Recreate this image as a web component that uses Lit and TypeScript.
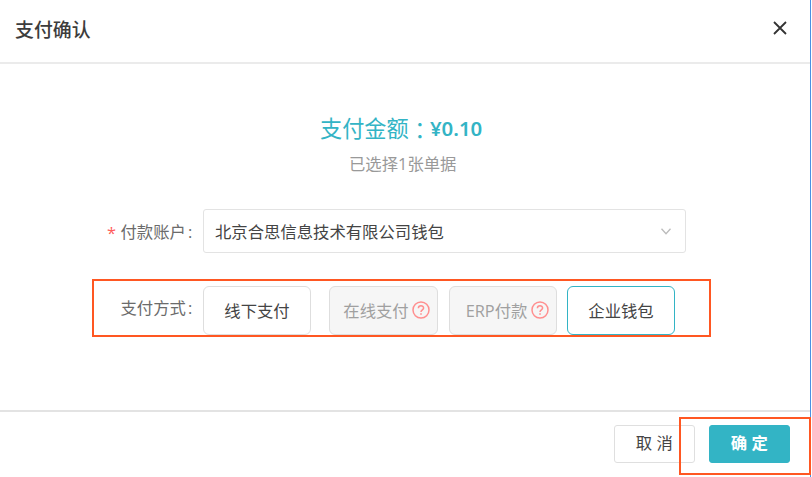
import { LitElement, html, css } from "lit";
import { customElement } from "lit/decorators.js";
import { classMap } from "lit/directives/class-map.js";

interface Method {
  label: string;
  cls: string;
  help?: boolean;
}

@customElement("app-root")
export class AppRoot extends LitElement {
  static styles = css`
    :host {
      display: block;
      position: relative;
      box-sizing: border-box;
      width: 812px;
      height: 477px;
      overflow: hidden;
      background: #fff;
      color: #444;
      font: 16.35px/24px "Open Sans", "Noto Sans CJK SC", sans-serif;
    }
    * { box-sizing: border-box; }
    .dialog {
      display: flex;
      flex-direction: column;
      width: 811px;
      height: 477px;
      border-right: 1px solid #4a90e2;
      white-space: nowrap;
    }
    header {
      display: flex;
      justify-content: space-between;
      height: 64px;
      padding: 17px 23px 0 15px;
      border-bottom: 2px solid #ebebeb;
    }
    .title {
      font-size: 18.9px;
      line-height: 26px;
      font-weight: 500;
      color: #3c3c3c;
    }
    .close { width: 14px; height: 14px; margin-top: 4px; }
    main { flex: 1; }
    .amount {
      margin: 49px 0 0 320px;
      font-size: 22.2px;
      line-height: 32px;
      color: #33b4c5;
      display: flex;
    }
    .sep { font-family: "Noto Sans CJK TC", sans-serif; }
    .value {
      font-family: "Noto Sans", "Open Sans", sans-serif;
      font-size: 20.4px;
      font-weight: 600;
      line-height: 30px;
      margin-left: -1px;
    }
    .count {
      margin: 7px 0 0 349px;
      color: #999;
    }
    .row { display: flex; }
    .label {
      width: 203px;
      padding-left: 120.5px;
      color: #6b6b6b;
      display: flex;
      position: relative;
    }
    .label .colon { margin-left: 2px; }
    .star {
      position: absolute;
      left: 107px;
      top: 2px;
      color: #ff5c5c;
    }
    .account { margin-top: 33px; align-items: center; }
    .account .label { padding-top: 1px; }
    .select {
      display: flex;
      align-items: center;
      justify-content: space-between;
      width: 483px;
      height: 44px;
      padding: 1px 14px 0 11px;
      border: 1.5px solid #e3e3e3;
      border-radius: 3px;
    }
    .select span { padding-top: 1px; }
    .methods { margin-top: 33px; }
    .methods .label { padding-top: 10px; }
    .method {
      display: flex;
      align-items: center;
      justify-content: center;
      height: 49px;
      width: 108px;
      border: 1px solid #dedede;
      border-radius: 6px;
    }
    .off {
      background: #f6f6f6;
      color: #a0a0a0;
      padding-left: 6px;
      gap: 3px;
    }
    .online { margin-left: 18px; width: 109px; }
    .erp { margin-left: 11px; padding-left: 9px; gap: 4px; }
    .wallet { margin-left: 10px; border: 1.5px solid #33b4c5; }
    .help { width: 18px; height: 18px; flex: none; margin-top: -1px; }
    footer {
      display: flex;
      justify-content: flex-end;
      gap: 14px;
      height: 67px;
      padding: 13px 20px 0 0;
      border-top: 2px solid #e3e3e3;
    }
    .btn {
      width: 81px;
      height: 38px;
      border: 1px solid #dfdfdf;
      border-radius: 3px;
      text-align: center;
      line-height: 35px;
      letter-spacing: 4.5px;
      padding-left: 4px;
    }
    .primary {
      background: #33b4c5;
      border-color: #33b4c5;
      color: #fff;
      font-weight: 700;
    }
    .mark { position: absolute; border: 2px solid #ff5722; }
    .mark-methods { left: 92px; top: 279px; width: 619px; height: 58px; }
    .mark-confirm { left: 679px; top: 417px; width: 132px; height: 58px; }
  `;

  private methods: Method[] = [
    { label: "线下支付", cls: "offline" },
    { label: "在线支付", cls: "online", help: true },
    { label: "ERP付款", cls: "erp", help: true },
    { label: "企业钱包", cls: "wallet" },
  ];

  private helpIcon() {
    return html`<svg class="help" viewBox="0 0 18 18" fill="none" stroke="#ff8f8f" stroke-width="1.5">
      <circle cx="9" cy="9" r="8"></circle>
      <path d="M6.4 7.2C6.4 3.9 11.6 4 11.6 7C11.6 8.9 9 8.8 9 11"></path>
      <path d="M9 12.2V13.8" stroke-width="1.6"></path>
    </svg>`;
  }

  render() {
    return html`
      <div class="dialog">
        <header>
          <div class="title">支付确认</div>
          <svg class="close" viewBox="0 0 14 14" fill="none" stroke="#333" stroke-width="1.8">
            <path d="M1 1L13 13M13 1L1 13"></path>
          </svg>
        </header>
        <main>
          <div class="amount">
            <span>支付金额</span><span class="sep" lang="zh-TW">：</span><span class="value">¥0.10</span>
          </div>
          <div class="count">已选择1张单据</div>
          <div class="row account">
            <div class="label"><span class="star">*</span>付款账户<span class="colon">:</span></div>
            <div class="select">
              <span>北京合思信息技术有限公司钱包</span>
              <svg width="10" height="7" viewBox="0 0 10 7" fill="none" stroke="#bbb" stroke-width="1.3">
                <path d="M0.5 0.7L5 5.7L9.5 0.7"></path>
              </svg>
            </div>
          </div>
          <div class="row methods">
            <div class="label">支付方式<span class="colon">:</span></div>
            ${this.methods.map(
              (m) => html`<div class=${classMap({ method: true, off: !!m.help, [m.cls]: true })}>
                <span>${m.label}</span>${m.help ? this.helpIcon() : ""}
              </div>`
            )}
          </div>
        </main>
        <footer>
          <div class="btn">取消</div>
          <div class="btn primary">确定</div>
        </footer>
      </div>
      <div class="mark mark-methods"></div>
      <div class="mark mark-confirm"></div>
    `;
  }
}
